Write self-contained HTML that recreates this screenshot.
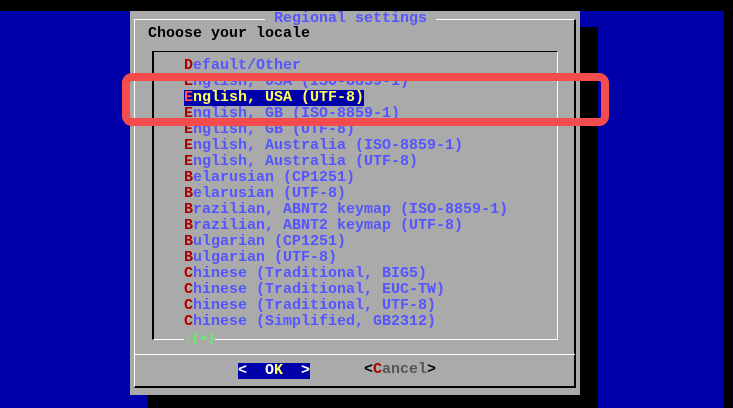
<!DOCTYPE html>
<html><head><meta charset="utf-8"><style>
*{margin:0;padding:0;box-sizing:border-box}
body{width:733px;height:408px;background:#000;position:relative;overflow:hidden;font-family:"Liberation Mono",monospace;font-size:15px;font-weight:bold;line-height:16px}
div{position:absolute}
.t{white-space:pre;height:16px}
.b{color:#5555ff}.r{color:#aa0000}
</style></head><body>
<div style="left:0;top:11px;width:724px;height:397px;background:#0000aa"></div>
<div style="left:580px;top:27px;width:18px;height:381px;background:#000"></div>
<div style="left:148px;top:395px;width:450px;height:13px;background:#000"></div>
<div style="left:130px;top:11px;width:450px;height:384px;background:#aaaaaa"></div>
<!-- outer frame -->
<div style="left:134px;top:19px;width:442px;height:369px;border-left:1px solid #fff;border-top:1px solid #fff;border-right:2px solid #000;border-bottom:2px solid #000"></div>
<div style="left:135px;top:354px;width:440px;height:1px;background:#fff"></div>
<div style="left:265px;top:11px;background:#aaaaaa" class="t b"> Regional settings </div>
<div style="left:148px;top:26px;color:#000" class="t">Choose your locale</div>
<!-- list box -->
<div style="left:152px;top:51px;width:406px;height:289px;border-left:2px solid #000;border-top:1px solid #000;border-right:1px solid #fff;border-bottom:1px solid #fff"></div>
<div style="left:184px;top:58px" class="t b"><span class="r">D</span>efault/Other</div>
<div style="left:184px;top:74px" class="t b"><span class="r">E</span>nglish, USA (ISO-8859-1)</div>
<div style="left:184px;top:90px;background:#0000aa;color:#ffff55" class="t"><span style="color:#ff5555">E</span>nglish, USA (UTF-8)</div>
<div style="left:184px;top:106px" class="t b"><span class="r">E</span>nglish, GB (ISO-8859-1)</div>
<div style="left:184px;top:122px" class="t b"><span class="r">E</span>nglish, GB (UTF-8)</div>
<div style="left:184px;top:138px" class="t b"><span class="r">E</span>nglish, Australia (ISO-8859-1)</div>
<div style="left:184px;top:154px" class="t b"><span class="r">E</span>nglish, Australia (UTF-8)</div>
<div style="left:184px;top:170px" class="t b"><span class="r">B</span>elarusian (CP1251)</div>
<div style="left:184px;top:186px" class="t b"><span class="r">B</span>elarusian (UTF-8)</div>
<div style="left:184px;top:202px" class="t b"><span class="r">B</span>razilian, ABNT2 keymap (ISO-8859-1)</div>
<div style="left:184px;top:218px" class="t b"><span class="r">B</span>razilian, ABNT2 keymap (UTF-8)</div>
<div style="left:184px;top:234px" class="t b"><span class="r">B</span>ulgarian (CP1251)</div>
<div style="left:184px;top:250px" class="t b"><span class="r">B</span>ulgarian (UTF-8)</div>
<div style="left:184px;top:266px" class="t b"><span class="r">C</span>hinese (Traditional, BIG5)</div>
<div style="left:184px;top:282px" class="t b"><span class="r">C</span>hinese (Traditional, EUC-TW)</div>
<div style="left:184px;top:298px" class="t b"><span class="r">C</span>hinese (Traditional, UTF-8)</div>
<div style="left:184px;top:314px" class="t b"><span class="r">C</span>hinese (Simplified, GB2312)</div>
<div style="left:184px;top:331px;color:#55ff55;background:#aaaaaa;font-size:13px" class="t">↓(+)</div>
<!-- buttons -->
<div style="left:238px;top:363px;width:72px;height:16px;background:#0000aa;color:#fff" class="t">&lt;  O<span style="color:#ffff55">K</span>  &gt;</div>
<div style="left:364px;top:362px;color:#000" class="t">&lt;<span class="r">C</span><span style="color:#555">ancel</span>&gt;</div>
<!-- annotation -->
<div style="left:122px;top:73px;width:487px;height:53px;border:8px solid #f44c4c;border-radius:10px"></div>
</body></html>
